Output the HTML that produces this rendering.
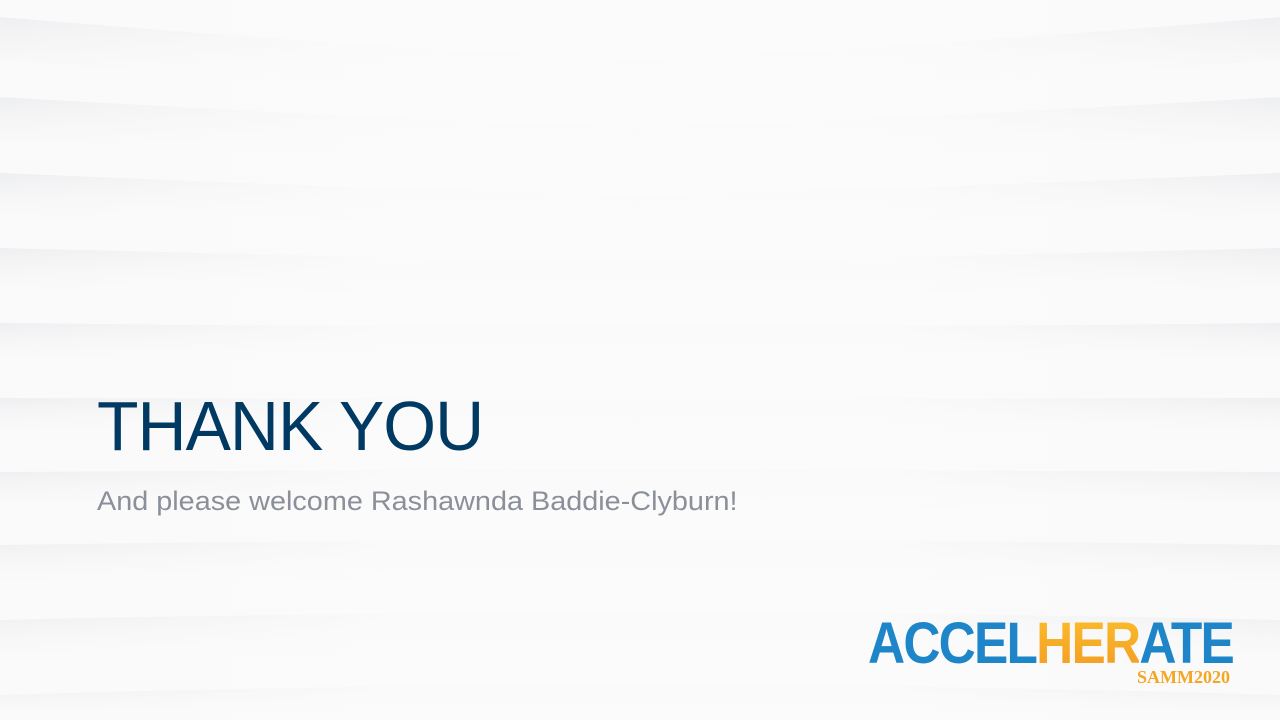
<!DOCTYPE html>
<html><head><style>
html,body{margin:0;padding:0}
body{width:1280px;height:720px;position:relative;overflow:hidden;background:#fafafa;font-family:"Liberation Sans",sans-serif}
svg.bg{position:absolute;left:0;top:0}
.t{position:absolute;left:97px;top:386px;font-size:70px;color:#003a63;white-space:nowrap;letter-spacing:-1px;transform-origin:left;transform:scaleX(0.97)}
.s{position:absolute;left:97px;top:486px;font-size:27px;color:#8a8f99;white-space:nowrap;transform-origin:left;transform:scaleX(1.067)}
.logo{position:absolute;left:868px;top:610px;font-size:58px;font-weight:bold;white-space:nowrap;letter-spacing:-2px;transform-origin:left top;transform:scaleX(0.886)}
.b{color:#1e86c8}.o{background:linear-gradient(#fbbf2a,#f39a24);-webkit-background-clip:text;color:transparent}
.samm{position:absolute;left:1137px;top:667px;font-family:"Liberation Serif",serif;font-weight:bold;font-size:18px;color:#f5a623}
</style></head><body>
<svg class="bg" width="1280" height="720">
<defs>
<linearGradient id="g" x1="0" y1="0" x2="0" y2="1"><stop offset="0" stop-color="#e6e7ea" stop-opacity=".6"/><stop offset="1" stop-color="#fafafa" stop-opacity="0"/></linearGradient>
<linearGradient id="w" x1="0" y1="0" x2="1" y2="0"><stop offset="0" stop-color="#fbfbfb" stop-opacity="0"/><stop offset=".3" stop-color="#fbfbfb" stop-opacity=".85"/><stop offset=".7" stop-color="#fbfbfb" stop-opacity=".85"/><stop offset="1" stop-color="#fbfbfb" stop-opacity="0"/></linearGradient>
</defs>
<g>
<path d="M0 17 Q400 50 640 60 Q880 50 1280 17 L1280 60 Q880 90 640 95 Q400 90 0 60Z" fill="url(#g)"/>
<path d="M0 97 Q400 120 640 128 Q880 120 1280 97 L1280 140 Q880 160 640 165 Q400 160 0 140Z" fill="url(#g)"/>
<path d="M0 173 Q400 190 640 195 Q880 190 1280 173 L1280 215 Q880 230 640 232 Q400 230 0 215Z" fill="url(#g)"/>
<path d="M0 248 Q400 258 640 262 Q880 258 1280 248 L1280 290 Q880 300 640 302 Q400 300 0 290Z" fill="url(#g)"/>
<path d="M0 323 Q640 330 1280 323 L1280 365 Q640 370 0 365Z" fill="url(#g)"/>
<path d="M0 398 Q640 400 1280 398 L1280 440 Q640 440 0 440Z" fill="url(#g)"/>
<path d="M0 472 Q640 468 1280 472 L1280 515 Q640 510 0 515Z" fill="url(#g)"/>
<path d="M0 545 Q640 535 1280 545 L1280 590 Q640 578 0 590Z" fill="url(#g)"/>
<path d="M0 620 Q640 605 1280 620 L1280 665 Q640 648 0 665Z" fill="url(#g)"/>
<path d="M0 695 Q640 675 1280 695 L1280 720 L0 720Z" fill="url(#g)"/>
</g>
<rect width="1280" height="720" fill="url(#w)"/>
</svg>
<div class="t">THANK YOU</div>
<div class="s">And please welcome Rashawnda Baddie-Clyburn!</div>
<div class="logo"><span class="b">ACCEL</span><span class="o">HER</span><span class="b">ATE</span></div>
<div class="samm">SAMM2020</div>
</body></html>
